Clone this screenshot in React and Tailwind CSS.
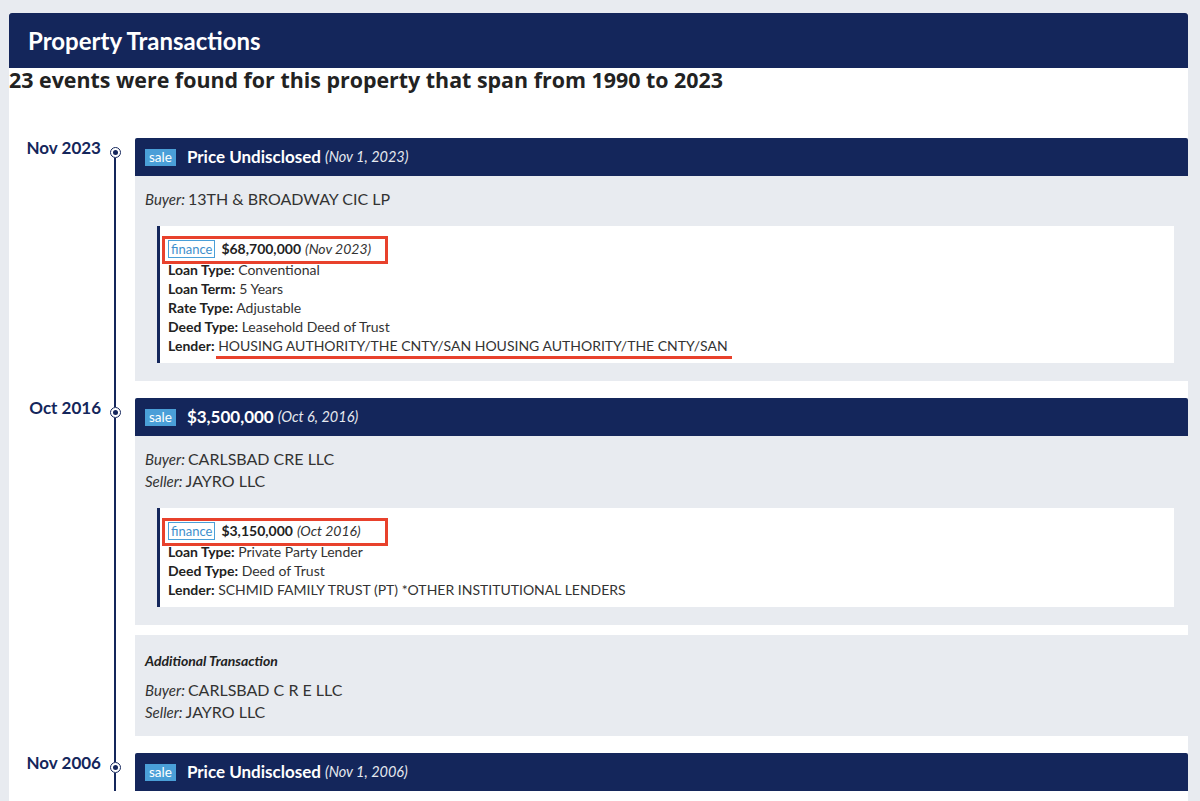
import React from 'react';

const NAVY = 'bg-[#14265b]';

const events = [
  {
    date: 'Nov 2023',
    title: 'Price Undisclosed',
    when: '(Nov 1, 2023)',
    parties: [['Buyer:', '13TH & BROADWAY CIC LP']],
    finance: {
      amount: '$68,700,000',
      when: '(Nov 2023)',
      rows: [
        ['Loan Type:', 'Conventional'],
        ['Loan Term:', '5 Years'],
        ['Rate Type:', 'Adjustable'],
        ['Deed Type:', 'Leasehold Deed of Trust'],
        ['Lender:', 'HOUSING AUTHORITY/THE CNTY/SAN HOUSING AUTHORITY/THE CNTY/SAN', true],
      ],
    },
  },
  {
    date: 'Oct 2016',
    title: '$3,500,000',
    when: '(Oct 6, 2016)',
    parties: [
      ['Buyer:', 'CARLSBAD CRE LLC'],
      ['Seller:', 'JAYRO LLC'],
    ],
    finance: {
      amount: '$3,150,000',
      when: '(Oct 2016)',
      rows: [
        ['Loan Type:', 'Private Party Lender'],
        ['Deed Type:', 'Deed of Trust'],
        ['Lender:', 'SCHMID FAMILY TRUST (PT) *OTHER INSTITUTIONAL LENDERS'],
      ],
    },
    additional: [
      ['Buyer:', 'CARLSBAD C R E LLC'],
      ['Seller:', 'JAYRO LLC'],
    ],
  },
  {
    date: 'Nov 2006',
    title: 'Price Undisclosed',
    when: '(Nov 1, 2006)',
  },
];

const Party = ({ label, value }) => (
  <div className="leading-[22px] text-[#333]">
    <span className="italic text-[15px]">{label}</span>
    <span className="text-[16px] ml-[3px]">{value}</span>
  </div>
);

const Finance = ({ data }) => (
  <div className="ml-[12px] bg-white border-l-[3px] border-[#14265b] pl-[8px] pt-[12px] pb-[8px] text-[14px] text-[#333]">
    <div className="relative leading-[22px] flex items-center">
      <span className="border border-[#4a9fd8] text-[#3f8fcc] text-[13px] leading-[16px] px-[2px] mr-[6px]">finance</span>
      <span className="font-bold text-[#222]">{data.amount}</span>
      <span className="italic ml-[4px]">{data.when}</span>
      <span className="absolute left-[-6px] top-[-2px] w-[226px] h-[28px] border-[3px] border-[#e8412c]" />
    </div>
    {data.rows.map(([k, v, mark]) => (
      <div key={k} className="leading-[19px]">
        <span className="font-bold text-[#222]">{k}</span>{' '}
        <span className="relative">
          {v}
          {mark && <span className="absolute left-[-2px] right-[-4px] bottom-[-5px] h-[3px] bg-[#e8412c]" />}
        </span>
      </div>
    ))}
  </div>
);

const Row = ({ ev, first, last }) => (
  <div className="flex">
    <div className="w-[126px] flex shrink-0">
      <div className="w-[92px] text-right font-bold text-[17px] text-[#14265b] leading-[20px]">{ev.date}</div>
      <div className="w-[28px] flex flex-col items-center">
        <div className={`w-[2px] h-[9px] ${first ? '' : NAVY}`} />
        <div className="w-[11px] h-[11px] rounded-full border-[1.5px] border-[#14265b] bg-white flex items-center justify-center">
          <div className="w-[5px] h-[5px] rounded-full bg-[#14265b]" />
        </div>
        <div className={`w-[2px] flex-1 ${NAVY}`} />
      </div>
    </div>
    <div className={`flex-1 ${last ? '' : 'pb-[17px]'}`}>
      <div className={`${NAVY} h-[38px] rounded-t-[2px] flex items-center px-[10px]`}>
        <span className="bg-[#4a9fd8] text-white text-[13.5px] leading-[17px] px-[4px] mr-[11px]">sale</span>
        <span className="text-white font-bold text-[17px]">{ev.title}</span>
        <span className="text-[#e6e9ef] italic text-[14.5px] ml-[4px]">{ev.when}</span>
      </div>
      {ev.parties && (
        <div className="bg-[#e8ebf0] pl-[10px] pr-[14px] pt-[12px] pb-[18px]">
          {ev.parties.map(([k, v]) => (
            <Party key={k} label={k} value={v} />
          ))}
          <div className="mt-[16px]">
            <Finance data={ev.finance} />
          </div>
        </div>
      )}
      {ev.additional && (
        <div className="bg-[#e8ebf0] mt-[10px] px-[10px] pt-[16px] pb-[13px]">
          <div className="font-bold italic text-[14px] leading-[20px] text-[#222] mb-[8px]">Additional Transaction</div>
          {ev.additional.map(([k, v]) => (
            <Party key={k} label={k} value={v} />
          ))}
        </div>
      )}
    </div>
  </div>
);

export default function App() {
  return (
    <div className="min-h-screen bg-[#e8ebf0] pt-[13px] pl-[9px] pr-[12px] font-['Lato',sans-serif]">
      <div className="bg-white min-h-[800px]">
        <div className={`${NAVY} h-[55px] rounded-t-[3px] flex items-center px-[19px]`}>
          <h1 className="text-white font-bold text-[24px]">Property Transactions</h1>
        </div>
        <h2 className="font-['Open_Sans',sans-serif] font-bold text-[21.4px] leading-[24px] text-[#222]">
          23 events were found for this property that span from 1990 to 2023
        </h2>
        <div className="pt-[46px]">
          {events.map((ev, i) => (
            <Row key={ev.date} ev={ev} first={i === 0} last={i === events.length - 1} />
          ))}
        </div>
      </div>
    </div>
  );
}
